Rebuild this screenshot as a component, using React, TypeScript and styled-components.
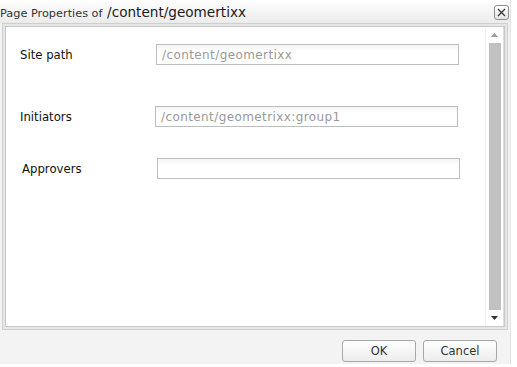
import React from "react";
import styled, { createGlobalStyle } from "styled-components";

const Global = createGlobalStyle`
  html, body {
    margin: 0;
    padding: 0;
    background: #ffffff;
  }
  body {
    font-family: "DejaVu Sans", Tahoma, sans-serif;
  }
`;

const Dialog = styled.div`
  width: 511px;
  height: 364px;
  background: #f3f3f3;
  border-right: 1px solid #e2e2e2;
  box-sizing: border-box;
  display: flex;
  flex-direction: column;
`;

const Header = styled.div`
  height: 23px;
  flex: none;
  display: flex;
  align-items: center;
  justify-content: space-between;
  background: linear-gradient(#ffffff, #ebebeb);
  box-sizing: border-box;
  padding: 0 1px 0 0;
`;

const Title = styled.div`
  font-family: "DejaVu Sans", sans-serif;
  font-size: 11.3px;
  color: #333;
  white-space: nowrap;
`;

const TitlePath = styled.span`
  font-family: "DejaVu Sans", sans-serif;
  font-size: 13.6px;
  font-weight: 400;
  color: #1a1a1a;
  margin-left: 1px;
`;

const CloseButton = styled.button`
  width: 15px;
  height: 15px;
  margin-top: 2px;
  padding: 0;
  border: 1px solid #8c8c8c;
  border-radius: 3px;
  background: linear-gradient(#ffffff, #e4e4e4);
  display: flex;
  align-items: center;
  justify-content: center;
`;

const Body = styled.div`
  flex: none;
  height: 307px;
  margin: 0 2px;
  border: 1px solid #cfcfcf;
  background: #e6e6e6;
  padding: 2px;
  box-sizing: border-box;
  display: flex;
`;

const Panel = styled.div`
  flex: 1;
  display: flex;
  background: #ffffff;
  border: 1px solid #c8c8c8;
  box-sizing: border-box;
`;

const Form = styled.div`
  flex: 1;
  padding: 17px 0 0 14px;
  display: flex;
  flex-direction: column;
`;

const Row = styled.div<{ $gap: number; $indent: number }>`
  display: flex;
  align-items: center;
  margin-top: ${(p) => p.$gap}px;
  padding-left: ${(p) => p.$indent}px;
`;

const Label = styled.div<{ $width: number }>`
  width: ${(p) => p.$width}px;
  flex: none;
  font-family: "DejaVu Sans", sans-serif;
  font-size: 11.7px;
  color: #111;
`;

const Input = styled.div`
  width: 303px;
  height: 21px;
  box-sizing: border-box;
  border: 1px solid #bdbdbd;
  background: linear-gradient(#f4f4f4, #ffffff 6px);
  font-family: "DejaVu Sans", sans-serif;
  font-size: 12px;
  letter-spacing: 0.4px;
  color: #999999;
  padding: 0 0 0 5px;
  display: flex;
  align-items: center;
  white-space: nowrap;
`;

const ScrollBar = styled.div`
  width: 15px;
  flex: none;
  display: flex;
  flex-direction: column;
  align-items: center;
  border-left: 1px solid #f0f0f0;
  border-right: 1px solid #dedede;
  padding: 0 1px;
`;

const Arrow = styled.div`
  height: 16px;
  flex: none;
  display: flex;
  align-items: center;
  justify-content: center;
`;

const Thumb = styled.div`
  flex: 1;
  width: 12px;
  background: #c1c1c1;
`;

const Footer = styled.div`
  flex: 1;
  display: flex;
  justify-content: flex-end;
  align-items: flex-start;
  gap: 7px;
  padding: 10px 13px 0 0;
`;

const Button = styled.button`
  width: 74px;
  height: 22px;
  border: 1px solid #a8a8a8;
  border-radius: 3px;
  background: linear-gradient(#ffffff, #ececec);
  font-family: "DejaVu Sans", sans-serif;
  font-size: 11.5px;
  color: #333;
  padding: 0;
`;

const fields = [
  { label: "Site path", value: "/content/geomertixx", gap: 0, indent: 0, lw: 136 },
  { label: "Initiators", value: "/content/geometrixx:group1", gap: 41, indent: 0, lw: 135 },
  { label: "Approvers", value: "", gap: 31, indent: 2, lw: 135 },
];

export default function App() {
  return (
    <>
      <Global />
      <Dialog>
        <Header>
          <Title>
            Page Properties of <TitlePath>/content/geomertixx</TitlePath>
          </Title>
          <CloseButton aria-label="close">
            <svg width="9" height="9" viewBox="0 0 9 9">
              <path d="M1 1L8 8M8 1L1 8" stroke="#333" strokeWidth="1.2" />
            </svg>
          </CloseButton>
        </Header>
        <Body>
          <Panel>
            <Form>
              {fields.map((f) => (
                <Row key={f.label} $gap={f.gap} $indent={f.indent}>
                  <Label $width={f.lw}>{f.label}</Label>
                  <Input>{f.value}</Input>
                </Row>
              ))}
            </Form>
            <ScrollBar>
              <Arrow>
                <svg width="7" height="4" viewBox="0 0 7 4">
                  <path d="M0 4L3.5 0L7 4Z" fill="#9a9a9a" />
                </svg>
              </Arrow>
              <Thumb />
              <Arrow>
                <svg width="7" height="4" viewBox="0 0 7 4">
                  <path d="M0 0L3.5 4L7 0Z" fill="#333" />
                </svg>
              </Arrow>
            </ScrollBar>
          </Panel>
        </Body>
        <Footer>
          <Button>OK</Button>
          <Button>Cancel</Button>
        </Footer>
      </Dialog>
    </>
  );
}
